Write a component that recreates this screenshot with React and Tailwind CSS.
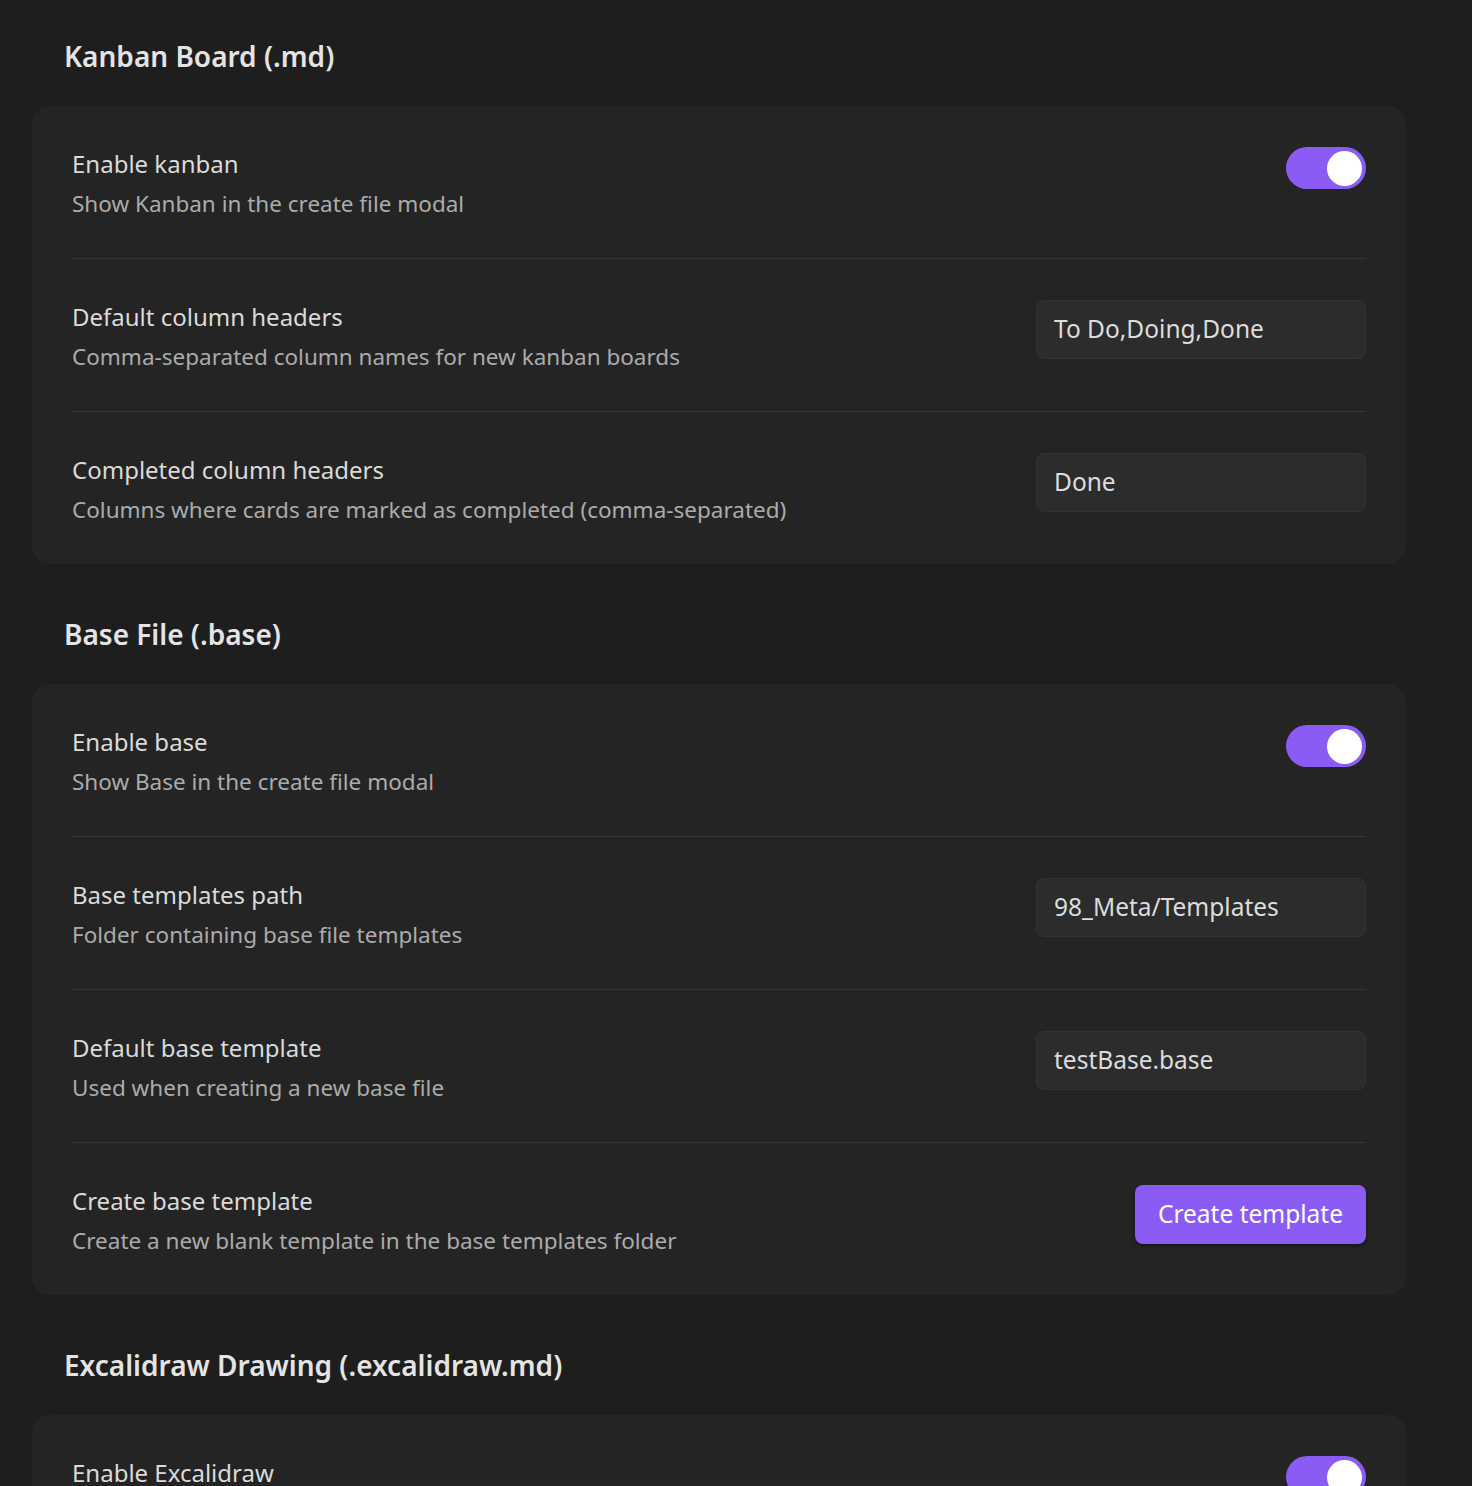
import React from "react";

const font = { fontFamily: '"Noto Sans", "Open Sans", sans-serif' };

function Toggle({ on = true }) {
  return (
    <div
      className={
        "mt-[1px] flex h-[42px] w-[80px] shrink-0 items-center rounded-full px-[4px] " +
        (on ? "justify-end bg-[#8a5cf5]" : "justify-start bg-[#3f3f3f]")
      }
    >
      <div className="h-[35px] w-[35px] rounded-full bg-white" />
    </div>
  );
}

function TextInput({ value }) {
  return (
    <div className="mt-[1px] flex h-[59px] w-[330px] shrink-0 items-center rounded-[8px] border border-[#333333] bg-[#2c2c2c] px-[17px] text-[24.5px] text-[#dcdcdc]">
      {value}
    </div>
  );
}

function Button({ label }) {
  return (
    <button className="mt-[2px] h-[59px] shrink-0 rounded-[8px] bg-[#8a5cf5] px-[23px] text-[24.5px] text-white shadow-[0_2px_4px_rgba(0,0,0,0.45)]">
      {label}
    </button>
  );
}

function Row({ title, desc, control, last }) {
  return (
    <div
      className={
        "flex items-start justify-between gap-8 pt-[40px] pb-[36px] " +
        (last ? "" : "border-b border-[#363636]")
      }
    >
      <div className="flex flex-col gap-[4px]">
        <div className="text-[24px] leading-[36px] text-[#dadada]">{title}</div>
        <div className="text-[22.5px] leading-[36px] text-[#ababab]">{desc}</div>
      </div>
      {control}
    </div>
  );
}

function Section({ heading, rows }) {
  return (
    <section>
      <h2 className="pl-[32px] text-[28px] font-semibold leading-[42px] text-[#e4e4e4]">
        {heading}
      </h2>
      <div className="mt-[29px] rounded-[18px] bg-[#242424] px-[40px]">
        {rows.map((r, i) => (
          <Row key={r.title} {...r} last={i === rows.length - 1} />
        ))}
      </div>
    </section>
  );
}

export default function App() {
  const sections = [
    {
      heading: "Kanban Board (.md)",
      rows: [
        {
          title: "Enable kanban",
          desc: "Show Kanban in the create file modal",
          control: <Toggle />,
        },
        {
          title: "Default column headers",
          desc: "Comma-separated column names for new kanban boards",
          control: <TextInput value="To Do,Doing,Done" />,
        },
        {
          title: "Completed column headers",
          desc: "Columns where cards are marked as completed (comma-separated)",
          control: <TextInput value="Done" />,
        },
      ],
    },
    {
      heading: "Base File (.base)",
      rows: [
        {
          title: "Enable base",
          desc: "Show Base in the create file modal",
          control: <Toggle />,
        },
        {
          title: "Base templates path",
          desc: "Folder containing base file templates",
          control: <TextInput value="98_Meta/Templates" />,
        },
        {
          title: "Default base template",
          desc: "Used when creating a new base file",
          control: <TextInput value="testBase.base" />,
        },
        {
          title: "Create base template",
          desc: "Create a new blank template in the base templates folder",
          control: <Button label="Create template" />,
        },
      ],
    },
    {
      heading: "Excalidraw Drawing (.excalidraw.md)",
      rows: [
        {
          title: "Enable Excalidraw",
          desc: "Show Excalidraw in the create file modal",
          control: <Toggle />,
        },
      ],
    },
  ];

  return (
    <div
      style={font}
      className="h-[1486px] w-full overflow-hidden bg-[#1e1e1e] antialiased"
    >
      <div className="box-content flex w-[1374px] flex-col gap-[49px] pl-[32px] pt-[35px]">
        {sections.map((s) => (
          <Section key={s.heading} {...s} />
        ))}
      </div>
    </div>
  );
}
